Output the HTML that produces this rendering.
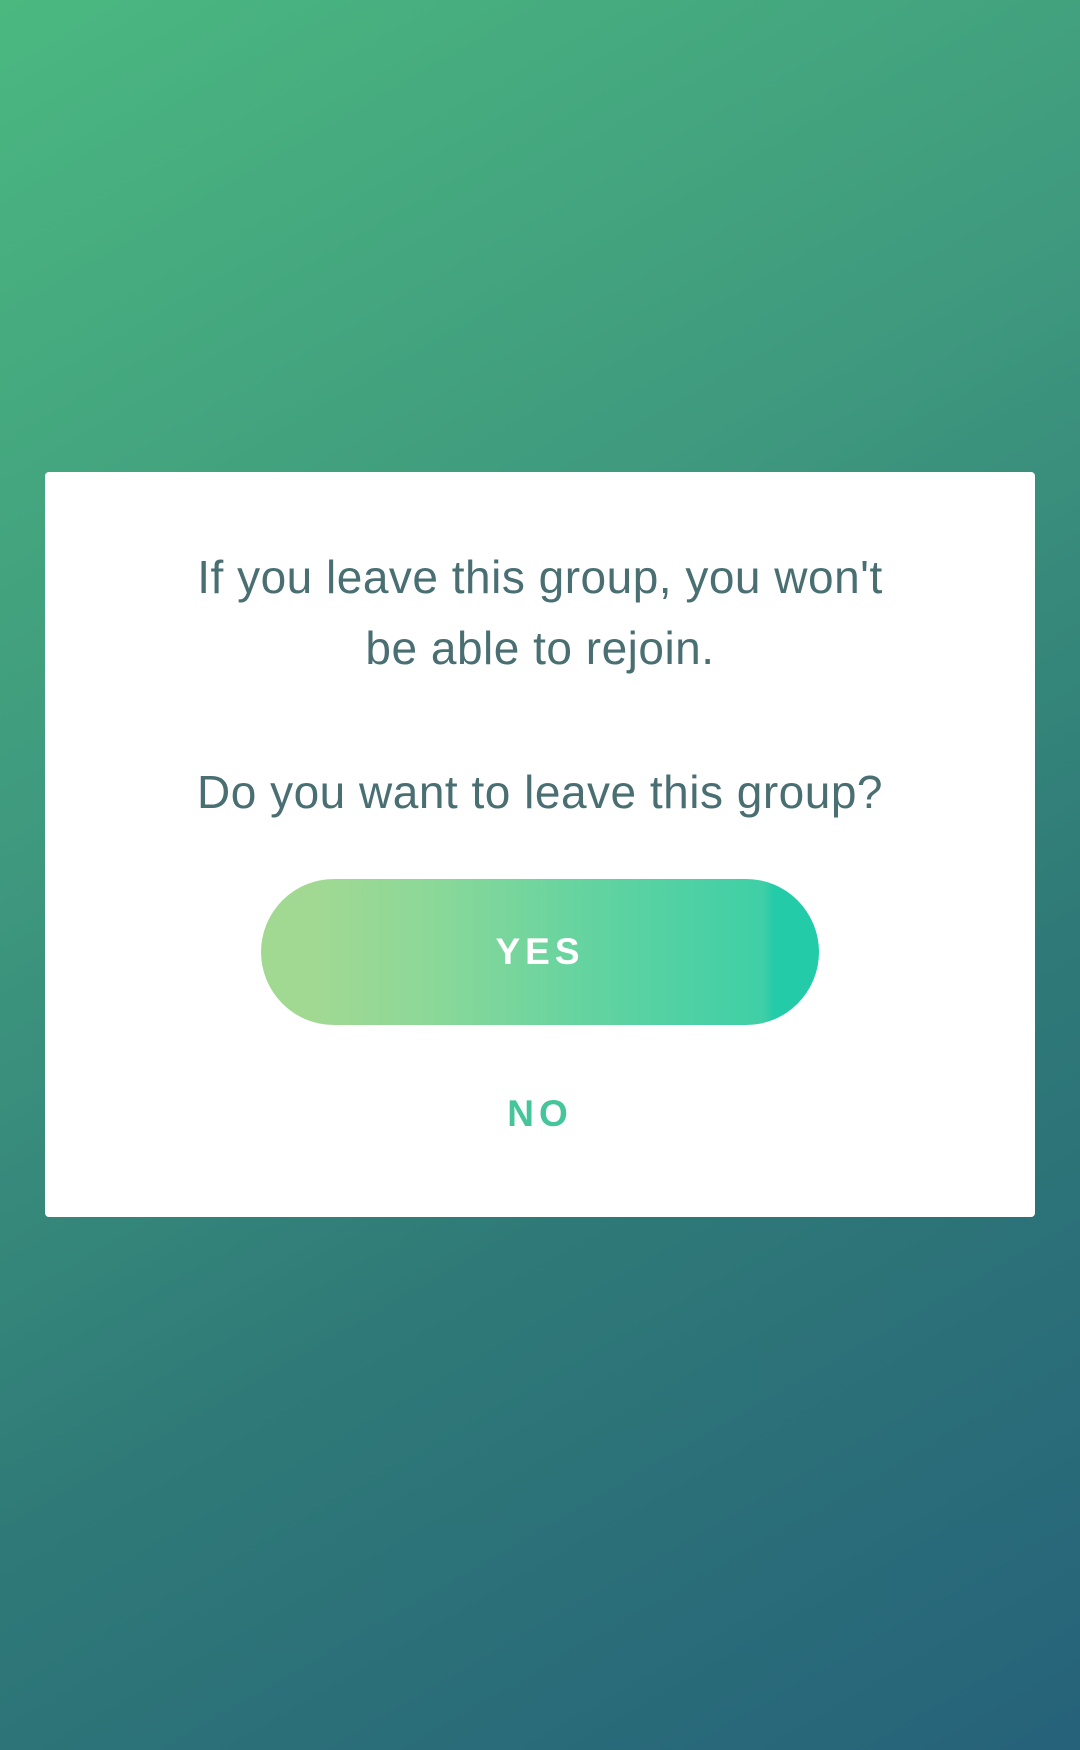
<!DOCTYPE html>
<html><head><style>
html,body{margin:0;padding:0;width:1080px;height:1750px;overflow:hidden}
body{background:linear-gradient(150deg,#4bb880 0%,#3f9a7e 35%,#2f7a78 65%,#26627a 100%);font-family:"Liberation Sans",sans-serif;position:relative}
.d{position:absolute;left:45px;top:472px;width:990px;height:745px;background:#fff;border-radius:4px}
.t{position:absolute;left:0;width:100%;text-align:center;color:#4a6f73;font-size:46px;letter-spacing:0.5px}
.b{position:absolute;left:216px;top:407px;width:558px;height:146px;border-radius:73px;background:linear-gradient(90deg,#a1d993 10%,#8cd898 30%,#62d3a0 60%,#3fcfa6 90%,#23cba9 92%);color:#fff;font-weight:bold;font-size:37px;letter-spacing:5px;text-align:center;line-height:146px}
.n{position:absolute;left:0;width:100%;top:621px;text-align:center;color:#46c59a;font-weight:bold;font-size:37px;letter-spacing:5px}
</style></head><body>
<div class="d">
<div class="t" style="top:70px;line-height:71px">If you leave this group, you won't<br>be able to rejoin.</div>
<div class="t" style="top:295px;line-height:50px">Do you want to leave this group?</div>
<div class="b">YES</div>
<div class="n">NO</div>
</div>
</body></html>
